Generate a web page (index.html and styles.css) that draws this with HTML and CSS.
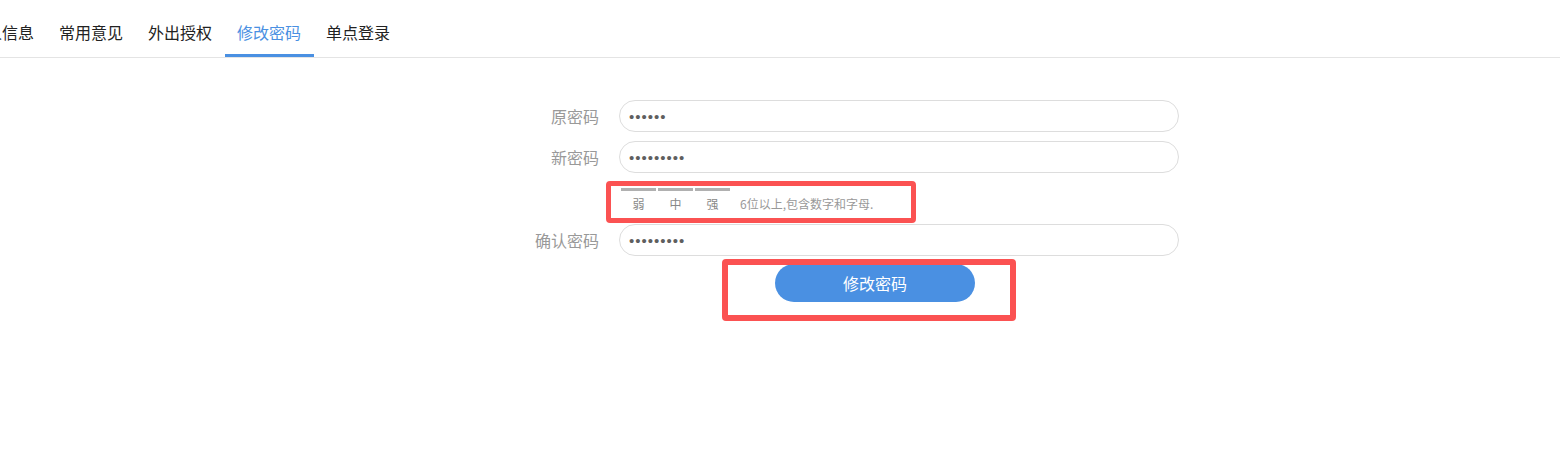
FILE: index.html
```html
<!DOCTYPE html>
<html lang="zh-CN">
<head>
<meta charset="utf-8">
<title>修改密码</title>
<link rel="stylesheet" href="styles.css">
</head>
<body>
<div class="page">
  <nav class="tabs">
    <a class="tab">个人信息</a>
    <a class="tab">常用意见</a>
    <a class="tab">外出授权</a>
    <a class="tab active">修改密码</a>
    <a class="tab">单点登录</a>
  </nav>

  <form class="pwd-form">
    <div class="row">
      <label class="label">原密码</label>
      <input class="field" type="password" value="123456">
    </div>
    <div class="row">
      <label class="label">新密码</label>
      <input class="field" type="password" value="abc123456">
    </div>
    <div class="meter">
      <span class="bar"></span>
      <span class="bar"></span>
      <span class="bar"></span>
      <span class="level">弱</span>
      <span class="level">中</span>
      <span class="level">强</span>
      <span class="hint">6位以上,包含数字和字母.</span>
    </div>
    <div class="row">
      <label class="label">确认密码</label>
      <input class="field" type="password" value="abc123456">
    </div>
    <div class="actions">
      <button class="submit" type="button">修改密码</button>
    </div>
  </form>

  <div class="mark mark-meter"></div>
  <div class="mark mark-submit"></div>
</div>
</body>
</html>
```

FILE: styles.css
```css
* {
  box-sizing: border-box;
}

html, body {
  margin: 0;
  padding: 0;
  background: #fff;
}

body {
  font-family: "Noto Sans CJK SC", "Noto Sans", "Liberation Sans", sans-serif;
  color: #333;
  width: 1560px;
  height: 462px;
  overflow: hidden;
}

.page {
  position: relative;
  height: 100%;
}

/* tab strip */
.tabs {
  display: flex;
  height: 58px;
  border-bottom: 1px solid #e4e4e4;
  margin-left: -42.5px;
}

.tab {
  display: block;
  padding: 20px 12.5px 10px;
  font-size: 16px;
  line-height: 24px;
  color: #222;
  border-bottom: 3px solid transparent;
  white-space: nowrap;
  cursor: pointer;
}

.tab.active {
  color: #4a90e2;
  border-bottom-color: #4a90e2;
}

/* password form */
.pwd-form {
  margin: 0 0 0 519px;
  padding-top: 42px;
  width: 660px;
}

.row {
  display: flex;
  align-items: center;
  gap: 20px;
}

.row + .row {
  margin-top: 9px;
}

.label {
  width: 80px;
  text-align: right;
  font-size: 16px;
  line-height: 24px;
  color: #999;
}

.field {
  width: 560px;
  height: 32px;
  border: 1px solid #ddd;
  border-radius: 16px;
  padding: 0 9px;
  font-family: "Liberation Sans", sans-serif;
  font-size: 15px;
  letter-spacing: 1px;
  color: #5f5f5f;
  background: #fff;
  outline: none;
}

/* strength meter */
.meter {
  display: grid;
  grid-template-columns: repeat(3, 35px) auto;
  grid-template-rows: 3px 16px;
  column-gap: 2px;
  row-gap: 5px;
  margin: 15px 0 12px 102px;
}

.bar {
  background: #b0b0b0;
}

.level {
  grid-row: 2;
  text-align: center;
  font-size: 12px;
  line-height: 16px;
  color: #888;
}

.hint {
  grid-row: 2;
  grid-column: 4;
  margin-left: 8px;
  font-size: 12px;
  line-height: 16px;
  color: #999;
}

.actions {
  margin: 8px 0 0 256px;
}

.submit {
  width: 200px;
  height: 38px;
  border: none;
  border-radius: 19px;
  background: #4a90e2;
  color: #fff;
  font-family: inherit;
  font-size: 16px;
  line-height: 36px;
  padding: 0;
  cursor: pointer;
}

/* red highlight frames laid over the form */
.mark {
  position: absolute;
  border: 5px solid #fb5252;
  border-radius: 4px;
  pointer-events: none;
}

.mark-meter {
  left: 606px;
  top: 181px;
  width: 310px;
  height: 42px;
}

.mark-submit {
  left: 722px;
  top: 259px;
  width: 294px;
  height: 62px;
  border-width: 6px;
}
```
